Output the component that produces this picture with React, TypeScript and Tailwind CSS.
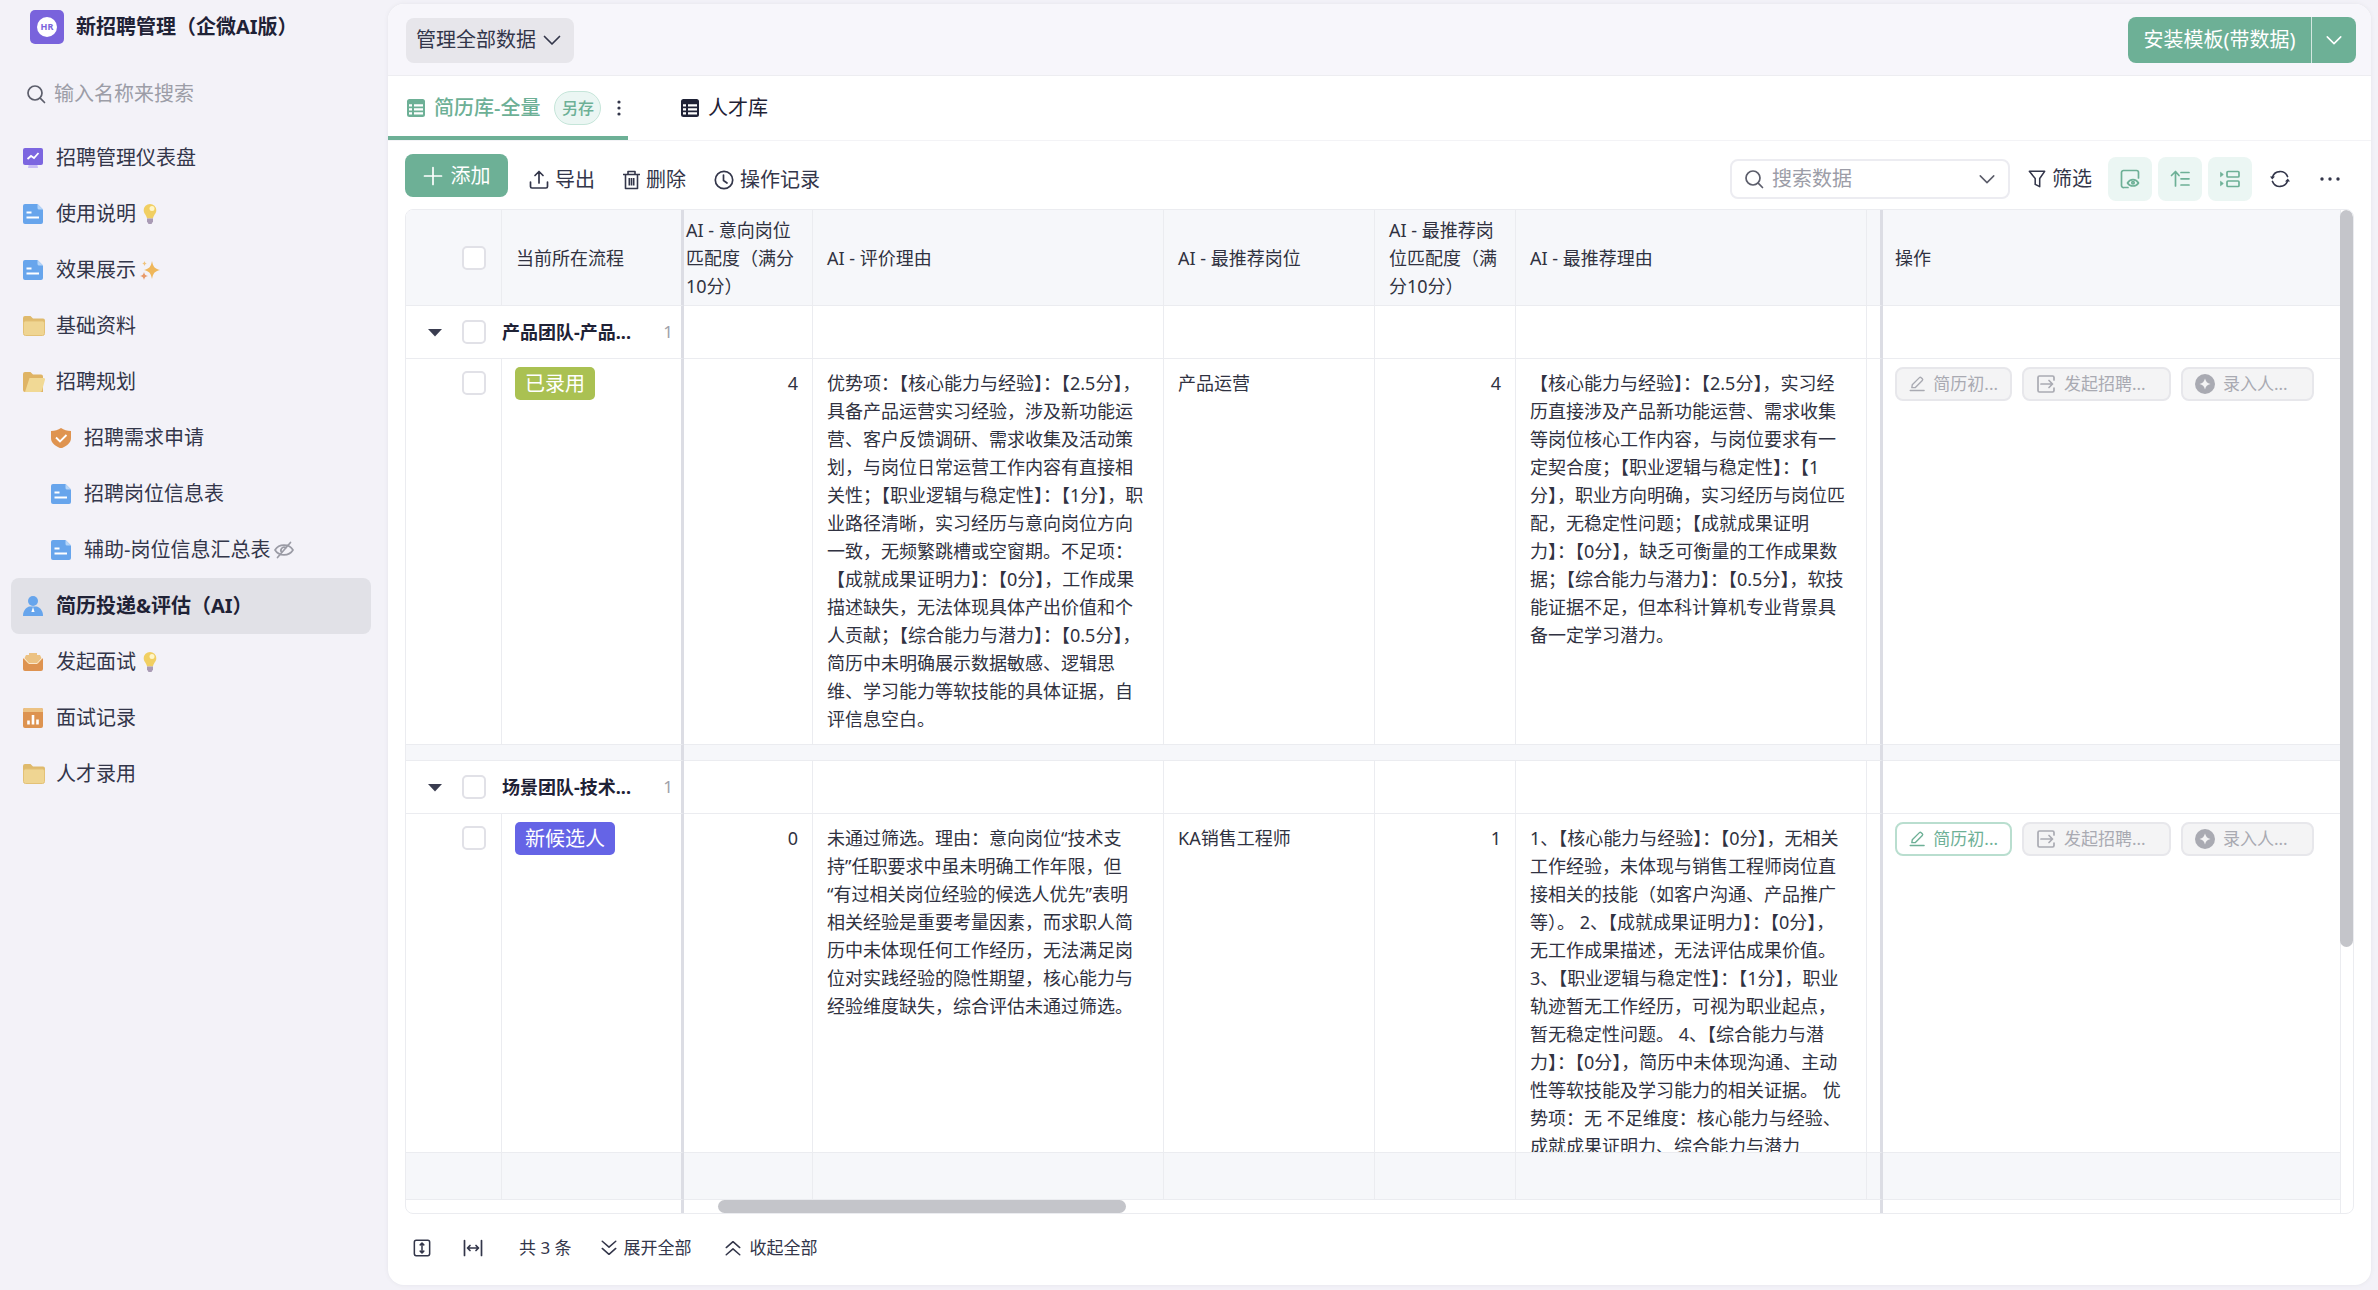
import type { ReactNode } from 'react';

type IconProps = { className?: string };

// Stroke icon wrapper, all toolbar icons are drawn on a 20x20 grid
function Stroke({ className = 'w-5 h-5', children }: { className?: string; children: ReactNode }) {
  return (
    <svg className={className} viewBox="0 0 20 20" fill="none" stroke="currentColor" strokeWidth={1.7} strokeLinecap="round" strokeLinejoin="round" aria-hidden="true">
      {children}
    </svg>
  );
}

const ChevronDown = ({ className }: IconProps) => (
  <Stroke className={className}><path d="M2.5 6.5L10 14l7.500-7.500" /></Stroke>
);

const SearchIcon = ({ className }: IconProps) => (
  <Stroke className={className}><circle cx="9" cy="9" r="7" /><path d="M14.200 14.200L18.500 18.500" /></Stroke>
);

const EditIcon = () => (
  <Stroke><path d="M3.500 14.500l.5-3.500L12.800 2.200a1.500 1.500 0 012.100 0l1.400 1.400a1.500 1.500 0 010 2.100L7.500 14.500zM1.500 18h17" /></Stroke>
);

const SendIcon = () => (
  <Stroke><path d="M18 6V3.500A1.500 1.500 0 0016.500 2h-13A1.500 1.500 0 002 3.500v13A1.500 1.500 0 003.500 18h13a1.500 1.500 0 001.500-1.500V14M5 10h11.500M13 6.500l3.500 3.500-3.500 3.500" /></Stroke>
);

const PlusDot = () => (
  <svg className="w-5 h-5" viewBox="0 0 20 20" aria-hidden="true">
    <circle cx="10" cy="10" r="10" fill="currentColor" />
    <path d="M10 4.500c.9 3.300 2.200 4.600 5.500 5.500-3.300.9-4.600 2.200-5.500 5.500-.9-3.300-2.200-4.600-5.500-5.500 3.300-.9 4.600-2.200 5.500-5.500z" fill="#f4f4f5" />
  </svg>
);

const TableIcon = () => (
  <svg className="w-5 h-5" viewBox="0 0 20 20" aria-hidden="true">
    <rect x="1" y="1" width="18" height="18" rx="2.500" fill="currentColor" />
    <path d="M3 6.200h3v2.200H3zM8 6.200h9v2.200H8zM3 10.200h3v2.200H3zM8 10.200h9v2.200H8zM3 14.200h3v2.200H3zM8 14.200h9v2.200H8z" fill="#fff" />
  </svg>
);

// Sidebar icons
const DashboardIcon = () => (
  <svg className="w-5 h-5" viewBox="0 0 20 20" aria-hidden="true">
    <path d="M6 15h8l1 5H5z" fill="#c9bdf6" />
    <rect width="20" height="17" rx="2" fill="#7c66e0" />
    <path d="M4.500 11l3.500-3 3 2 4.500-5" fill="none" stroke="#fff" strokeWidth="1.800" />
  </svg>
);

const DocIcon = () => (
  <svg className="w-5 h-5" viewBox="0 0 20 20" aria-hidden="true">
    <path d="M2 0h12.500L20 5.500V18a2 2 0 01-2 2H2a2 2 0 01-2-2V2a2 2 0 012-2z" fill="#67a5ec" />
    <path d="M14.500 0L20 5.500h-4a1.500 1.500 0 01-1.500-1.500z" fill="#b5d5f8" />
    <path d="M3.500 8.500h5M3.500 13.500h12.500" stroke="#fff" strokeWidth="1.800" />
  </svg>
);

const FolderIcon = () => (
  <svg className="w-[22px] h-5" viewBox="0 0 22 20" aria-hidden="true">
    <path d="M2 0h5.500L10 2.500h10a2 2 0 012 2V17H0V2a2 2 0 012-2z" fill="#dfba6c" />
    <rect x="0.500" y="5" width="21" height="14.500" rx="2" fill="#efd592" stroke="#e3c176" />
  </svg>
);

const FolderOpenIcon = () => (
  <svg className="w-[22px] h-5" viewBox="0 0 22 20" aria-hidden="true">
    <path d="M2 0h5.500L10 2.500h8a2 2 0 012 2V20H2a2 2 0 01-2-2V2a2 2 0 012-2z" fill="#dfb465" />
    <path d="M6.500 6H20.500a1.500 1.500 0 011.400 2L19 18.500a2 2 0 01-2 1.500H2z" fill="#f1d995" />
  </svg>
);

const ShieldIcon = () => (
  <svg className="w-5 h-5" viewBox="0 0 20 20" aria-hidden="true">
    <path d="M10 0c3 2 6 2.800 10 3v7c0 5-4 8-10 10.500C4 18 0 15 0 10V3c4-.2 7-1 10-3z" fill="#df9450" />
    <path d="M5 9.500l4 4 6.500-6.500" fill="none" stroke="#fff" strokeWidth="1.800" />
  </svg>
);

const PersonIcon = () => (
  <svg className="w-5 h-5" viewBox="0 0 20 20" aria-hidden="true">
    <circle cx="10" cy="5" r="5" fill="#67a5ec" />
    <path d="M6 10.500h8c4 1.500 6 5 6 9.500H0c0-4.500 2-8 6-9.500z" fill="#67a5ec" />
    <path d="M10 11l1.600 5H8.400z" fill="#fff" />
  </svg>
);

const BoxIcon = () => (
  <svg className="w-5 h-5" viewBox="0 0 20 20" aria-hidden="true">
    <path d="M6 1h8v2h3l3 6v6H0V9l3-6h3z" fill="#ecc283" />
    <path d="M0 6l5.500 6h9L20 6v11a2 2 0 01-2 2H2a2 2 0 01-2-2z" fill="#de9350" />
    <path d="M1 6l5 5.500h8L19 6" fill="none" stroke="#fbe7cc" strokeWidth="1" />
  </svg>
);

const ChartIcon = () => (
  <svg className="w-5 h-5" viewBox="0 0 20 20" aria-hidden="true">
    <rect width="20" height="20" rx="2" fill="#dd9350" />
    <path d="M2 0h16a2 2 0 012 2v2H0V2a2 2 0 012-2z" fill="#ecc283" />
    <path d="M5.500 16.500v-4M10 16.500V7M14.500 16.500v-5" stroke="#fff" strokeWidth="2.600" />
  </svg>
);

const BulbIcon = () => (
  <svg className="w-5 h-5" viewBox="0 0 20 20" role="img" aria-label="灯泡">
    <path d="M10 0a6.300 6.300 0 016.300 6.300c0 3.400-2.800 4.700-3.300 8.200H7c-.5-3.500-3.300-4.800-3.300-8.200A6.300 6.300 0 0110 0z" fill="#f1cf62" />
    <circle cx="12" cy="4.500" r="2.500" fill="#fff6c8" />
    <path d="M7 14.500h6v3L11.500 20h-3L7 17.500z" fill="#a99bb5" />
  </svg>
);

const SparkIcon = () => (
  <svg className="w-5 h-5" viewBox="0 0 20 20" role="img" aria-label="闪亮">
    <path d="M12 1c1.200 6 2.500 7.500 8 9-5.500 1.500-6.800 3-8 9-1.200-6-2.500-7.500-8-9 5.500-1.500 6.800-3 8-9z" fill="#efb75a" />
    <path d="M4 12c.5 2.500 1.300 3.200 4 4-2.700.8-3.500 1.500-4 4-.5-2.500-1.300-3.200-4-4 2.700-.8 3.500-1.500 4-4z" fill="#e89a6a" />
    <path d="M4.500 1c.4 1.700.9 2.200 2.500 2.600-1.600.4-2.100.9-2.500 2.600-.4-1.700-.9-2.200-2.500-2.600C3.600 3.200 4.100 2.700 4.500 1z" fill="#efc27a" />
  </svg>
);

const HiddenIcon = () => (
  <Stroke className="w-5 h-5 text-[#9a9ba5]"><path d="M1 10c4-6.500 14-6.500 18 0-4 6.500-14 6.500-18 0zM16.500 2.500l-13 15M8 12.500a3 3 0 014-4.500" /></Stroke>
);

interface NavItem {
  label: string;
  icon: ReactNode;
  suffix?: ReactNode;
  child?: boolean;
  active?: boolean;
}

const navItems: NavItem[] = [
  { label: '招聘管理仪表盘', icon: <DashboardIcon /> },
  { label: '使用说明', icon: <DocIcon />, suffix: <BulbIcon /> },
  { label: '效果展示', icon: <DocIcon />, suffix: <SparkIcon /> },
  { label: '基础资料', icon: <FolderIcon /> },
  { label: '招聘规划', icon: <FolderOpenIcon /> },
  { label: '招聘需求申请', icon: <ShieldIcon />, child: true },
  { label: '招聘岗位信息表', icon: <DocIcon />, child: true },
  { label: '辅助-岗位信息汇总表', icon: <DocIcon />, suffix: <HiddenIcon />, child: true },
  { label: '简历投递&评估（AI）', icon: <PersonIcon />, active: true },
  { label: '发起面试', icon: <BoxIcon />, suffix: <BulbIcon /> },
  { label: '面试记录', icon: <ChartIcon /> },
  { label: '人才录用', icon: <FolderIcon /> },
];

interface Candidate {
  group: string;
  status: string;
  statusClass: string;
  score: number;
  reason: string[];
  bestJob: string;
  bestScore: number;
  bestReason: string[];
  canScreen: boolean;
  bodyClass: string;
}

const candidates: Candidate[] = [
  {
    group: '产品团队-产品...',
    status: '已录用',
    statusClass: 'bg-[#aac152]',
    score: 4,
    reason: [
      '优势项：【核心能力与经验】：【2.5分】，',
      '具备产品运营实习经验，涉及新功能运',
      '营、客户反馈调研、需求收集及活动策',
      '划，与岗位日常运营工作内容有直接相',
      '关性；【职业逻辑与稳定性】：【1分】，职',
      '业路径清晰，实习经历与意向岗位方向',
      '一致，无频繁跳槽或空窗期。不足项：',
      '【成就成果证明力】：【0分】，工作成果',
      '描述缺失，无法体现具体产出价值和个',
      '人贡献；【综合能力与潜力】：【0.5分】，',
      '简历中未明确展示数据敏感、逻辑思',
      '维、学习能力等软技能的具体证据，自',
      '评信息空白。',
    ],
    bestJob: '产品运营',
    bestScore: 4,
    bestReason: [
      '【核心能力与经验】：【2.5分】，实习经',
      '历直接涉及产品新功能运营、需求收集',
      '等岗位核心工作内容，与岗位要求有一',
      '定契合度；【职业逻辑与稳定性】：【1',
      '分】，职业方向明确，实习经历与岗位匹',
      '配，无稳定性问题；【成就成果证明',
      '力】：【0分】，缺乏可衡量的工作成果数',
      '据；【综合能力与潜力】：【0.5分】，软技',
      '能证据不足，但本科计算机专业背景具',
      '备一定学习潜力。',
    ],
    canScreen: false,
    bodyClass: 'h-[375px]',
  },
  {
    group: '场景团队-技术...',
    status: '新候选人',
    statusClass: 'bg-[#6564e6]',
    score: 0,
    reason: [
      '未通过筛选。理由：意向岗位“技术支',
      '持”任职要求中虽未明确工作年限，但',
      '“有过相关岗位经验的候选人优先”表明',
      '相关经验是重要考量因素，而求职人简',
      '历中未体现任何工作经历，无法满足岗',
      '位对实践经验的隐性期望，核心能力与',
      '经验维度缺失，综合评估未通过筛选。',
    ],
    bestJob: 'KA销售工程师',
    bestScore: 1,
    bestReason: [
      '1、【核心能力与经验】：【0分】，无相关',
      '工作经验，未体现与销售工程师岗位直',
      '接相关的技能（如客户沟通、产品推广',
      '等）。 2、【成就成果证明力】：【0分】，',
      '无工作成果描述，无法评估成果价值。',
      '3、【职业逻辑与稳定性】：【1分】，职业',
      '轨迹暂无工作经历，可视为职业起点，',
      '暂无稳定性问题。 4、【综合能力与潜',
      '力】：【0分】，简历中未体现沟通、主动',
      '性等软技能及学习能力的相关证据。 优',
      '势项：无 不足维度：核心能力与经验、',
      '成就成果证明力、综合能力与潜力',
    ],
    canScreen: true,
    bodyClass: 'h-[328px]',
  },
];

function Checkbox({ label }: { label: string }) {
  return (
    <input
      type="checkbox"
      aria-label={label}
      className="block w-6 h-6 shrink-0 appearance-none rounded-[5px] border-2 border-[#e1e1e7] bg-white checked:bg-[#6db096]"
    />
  );
}

function ActionButton({ icon, label, width, enabled }: { icon: ReactNode; label: string; width: string; enabled?: boolean }) {
  const tone = enabled
    ? 'border-[#b9decf] bg-white text-[#6db096]'
    : 'border-[#e7e7eb] bg-[#f4f4f5] text-[#a9aab2]';
  return (
    <button type="button" disabled={!enabled} className={`flex h-[34px] shrink-0 items-center gap-2 rounded-lg border-2 px-3 text-[17px] ${width} ${tone}`}>
      {icon}
      <span className="whitespace-nowrap">{label}</span>
    </button>
  );
}

function Sidebar() {
  return (
    <aside className="w-[388px] shrink-0 text-xl text-[#33364a]">
      <div className="flex items-center gap-3 pl-[30px] pt-2.5">
        <svg className="w-[34px] h-[34px]" viewBox="0 0 34 34" role="img" aria-label="HR">
          <rect width="34" height="34" rx="5" fill="#7963dc" />
          <circle cx="17" cy="17" r="10" fill="#fff" />
          <text x="17" y="20" textAnchor="middle" fontSize="9" fontWeight="700" fill="#7963dc">HR</text>
        </svg>
        <h1 className="font-bold text-[#1f2236]">新招聘管理（企微AI版）</h1>
      </div>
      <label className="mt-[30px] flex h-10 items-center gap-2 pl-[26px] text-[#5c5e6b]">
        <SearchIcon className="w-5 h-5 shrink-0" />
        <input type="search" aria-label="搜索名称" placeholder="输入名称来搜索" className="w-full bg-transparent outline-none placeholder:text-[#9c9da7]" />
      </label>
      <nav className="mt-4 pl-[11px] pr-[17px]">
        {navItems.map((item) => (
          <a
            key={item.label}
            href="#"
            className={`flex h-14 items-center rounded-lg pr-3 ${item.child ? 'pl-10' : 'pl-3'} ${
              item.active ? 'bg-[#e1e1e7] font-bold text-[#1f2236]' : ''
            }`}
          >
            <span className="flex w-[33px] shrink-0">{item.icon}</span>
            <span className="whitespace-nowrap">{item.label}</span>
            {item.suffix && <span className="ml-1">{item.suffix}</span>}
          </a>
        ))}
      </nav>
    </aside>
  );
}

function Toolbar() {
  return (
    <div className="flex items-start pl-[17px] pr-[31px] pt-[13px] text-xl text-[#33364a]">
      <button type="button" className="flex h-[43px] w-[103px] items-center justify-center gap-2 rounded-lg bg-[#6db096] text-white">
        <Stroke><path d="M10 1.500v17M1.500 10h17" /></Stroke>
        添加
      </button>
      <div className="flex h-12 items-center gap-7 pl-[21px] pt-1">
        <button type="button" className="flex items-center gap-1.5">
          <Stroke><path d="M10 13V2M6 5.500L10 1.500l4 4M1.500 12v4.500A1.500 1.500 0 003 18h14a1.500 1.500 0 001.500-1.500V12" /></Stroke>
          导出
        </button>
        <button type="button" className="flex items-center gap-1.5">
          <svg className="w-[17px] h-5" viewBox="0 0 17 20" fill="none" stroke="currentColor" strokeWidth="1.600" strokeLinejoin="round" aria-hidden="true">
            <path d="M0 4.500h17M5 4V1.500h7V4M2.500 4.500V18.500h12V4.500M6.300 8v7.500M8.500 8v7.500M10.700 8v7.500" />
          </svg>
          删除
        </button>
        <button type="button" className="flex items-center gap-1.5">
          <Stroke><circle cx="10" cy="10" r="8.700" /><path d="M9.500 5v5.500l3.500 2.500" /></Stroke>
          操作记录
        </button>
      </div>
      <div className="ml-auto flex items-center pt-[3px]">
        <label className="flex h-10 w-[280px] items-center gap-2 rounded-lg border-2 border-[#ececf1] px-3 text-[#5c5e6b]">
          <SearchIcon className="w-5 h-5 shrink-0" />
          <input type="search" aria-label="搜索数据" placeholder="搜索数据" className="min-w-0 flex-1 bg-transparent outline-none placeholder:text-[#9c9da7]" />
          <ChevronDown className="w-[18px] h-[18px] shrink-0" />
        </label>
        <button type="button" className="ml-[18px] flex items-center gap-1.5">
          <Stroke className="w-[18px] h-5"><path d="M1.500 1.500h17l-5.500 8v9l-5-2.500v-6.500z" /></Stroke>
          筛选
        </button>
        <div className="ml-4 flex gap-[6px] text-[#6db096]">
          <button type="button" aria-label="备注" className="flex h-11 w-11 items-center justify-center rounded-lg bg-[#ebf6f3]">
            <Stroke><path d="M8 18.500H4A2 2 0 011.500 16.500V3.500A2 2 0 013.500 1.500h13a2 2 0 012 2V9M7.500 14c2.500-4.500 8.500-4.500 11 0-2.500 4-8.500 4-11 0z" /><circle cx="13" cy="13.800" r="1.200" /></Stroke>
          </button>
          <button type="button" aria-label="排序" className="flex h-11 w-11 items-center justify-center rounded-lg bg-[#ebf6f3]">
            <Stroke><path d="M5.500 17V3M1.500 6.500l4-4 3.500 4M11 3.500h8M11 9.800h8M11 16h8" /></Stroke>
          </button>
          <button type="button" aria-label="分组" className="flex h-11 w-11 items-center justify-center rounded-lg bg-[#ebf6f3]">
            <Stroke><rect x="7" y="2.500" width="12" height="5.500" rx="1" /><rect x="7" y="12" width="12" height="5.500" rx="1" /><path d="M.8 3.500l2.500 2-2.500 2zM.8 12.500l2.500 2-2.500 2z" fill="currentColor" strokeWidth="0.800" /></Stroke>
          </button>
        </div>
        <button type="button" aria-label="刷新" className="ml-[18px]">
          <Stroke><path d="M2.500 8a8 8 0 0115-.5M17.500 12a8 8 0 01-15 .5" /><path d="M0 7.500h5L2.200 10.500zM15 12.500h5l-2.200-3z" fill="currentColor" stroke="none" /></Stroke>
        </button>
        <button type="button" aria-label="更多" className="ml-[30px]">
          <svg className="w-5 h-5" viewBox="0 0 20 20" fill="currentColor" aria-hidden="true"><circle cx="2" cy="10" r="1.700" /><circle cx="10" cy="10" r="1.700" /><circle cx="18" cy="10" r="1.700" /></svg>
        </button>
      </div>
    </div>
  );
}

// Cell borders shared by every row
const line = 'border-r border-[#ebecf0]';
const pin = 'border-r-[3px] border-[#dcdde4]';

function CandidateRows({ item }: { item: Candidate }) {
  return (
    <>
      <tr className="h-[52px]">
        <td colSpan={2} className={pin}>
          <div className="flex items-center pl-[22px] pr-2">
            <svg className="mr-5 w-3.5 h-3.5" viewBox="0 0 14 14" aria-hidden="true"><path d="M0 4h14L7 11.500z" fill="#3a3d50" /></svg>
            <Checkbox label={`选择${item.group}`} />
            <span className="ml-4 font-bold text-[#1f2236]">{item.group}</span>
            <span className="ml-auto text-[17px] text-[#a0a1aa]">1</span>
          </div>
        </td>
        <td className={line} />
        <td className={line} />
        <td className={line} />
        <td className={line} />
        <td className={line} />
        <td className={pin} />
        <td />
      </tr>
      <tr className="align-top [&>td]:border-t [&>td]:border-t-[#ebecf0]">
        <td className={`pl-14 pt-3 ${line}`}><Checkbox label={`选择${item.status}`} /></td>
        <td className={`pl-[13px] pt-2 ${pin}`}>
          <span className={`inline-flex h-[33px] items-center rounded-[5px] px-2.5 text-xl text-white ${item.statusClass}`}>{item.status}</span>
        </td>
        <td className={`pt-2.5 pr-3.5 text-right ${line}`}>{item.score}</td>
        <td className={`pt-2.5 pl-3.5 ${line}`}>
          <div className={`overflow-hidden whitespace-pre ${item.bodyClass}`}>{item.reason.join('\n')}</div>
        </td>
        <td className={`pt-2.5 pl-3.5 ${line}`}>{item.bestJob}</td>
        <td className={`pt-2.5 pr-3.5 text-right ${line}`}>{item.bestScore}</td>
        <td className={`pt-2.5 pl-3.5 ${line}`}>
          <div className={`overflow-hidden whitespace-pre ${item.bodyClass}`}>{item.bestReason.join('\n')}</div>
        </td>
        <td className={pin} />
        <td className="pl-3 pt-2">
          <div className="flex gap-2.5">
            <ActionButton icon={<EditIcon />} label="简历初..." width="w-[117px]" enabled={item.canScreen} />
            <ActionButton icon={<SendIcon />} label="发起招聘..." width="w-[149px]" />
            <ActionButton icon={<PlusDot />} label="录入人..." width="w-[133px]" />
          </div>
        </td>
      </tr>
    </>
  );
}

function DataTable() {
  return (
    <div className="relative mx-[17px] mt-[7px] flex overflow-hidden rounded-lg border border-[#ebecf0]">
      <table className="min-w-0 flex-1 table-fixed border-separate border-spacing-0 text-lg leading-7 text-[#303241]">
        <colgroup>
          <col className="w-24" />
          <col className="w-[182px]" />
          <col className="w-[129px]" />
          <col className="w-[351px]" />
          <col className="w-[211px]" />
          <col className="w-[141px]" />
          <col className="w-[351px]" />
          <col className="w-4" />
          <col />
        </colgroup>
        <thead className="bg-[#f6f7fa] text-left [&_th]:border-b [&_th]:border-b-[#ebecf0] [&_th]:font-normal">
          <tr className="h-24">
            <th className={`pl-14 ${line}`}><Checkbox label="全选" /></th>
            <th className={`pl-3.5 ${pin}`}>当前所在流程</th>
            <th className={`whitespace-pre pl-0.5 ${line}`}>{'AI - 意向岗位\n匹配度（满分\n10分）'}</th>
            <th className={`pl-3.5 ${line}`}>AI - 评价理由</th>
            <th className={`pl-3.5 ${line}`}>AI - 最推荐岗位</th>
            <th className={`whitespace-pre pl-3.5 ${line}`}>{'AI - 最推荐岗\n位匹配度（满\n分10分）'}</th>
            <th className={`pl-3.5 ${line}`}>AI - 最推荐理由</th>
            <th className={pin} />
            <th className="pl-3">操作</th>
          </tr>
        </thead>
        <tbody>
          <CandidateRows item={candidates[0]} />
          <tr className="h-[17px] bg-[#f6f7fa] [&>td]:border-y [&>td]:border-y-[#ebecf0]">
            <td colSpan={2} className={pin} />
            <td colSpan={6} className={pin} />
            <td />
          </tr>
          <CandidateRows item={candidates[1]} />
          <tr className="h-12 bg-[#f6f7fa] [&>td]:border-y [&>td]:border-y-[#ebecf0]">
            <td className={line} />
            <td className={pin} />
            <td className={line} />
            <td className={line} />
            <td className={line} />
            <td className={line} />
            <td className={line} />
            <td className={pin} />
            <td />
          </tr>
          <tr className="h-[13px]">
            <td colSpan={2} className={pin} />
            <td colSpan={6} className={pin} />
            <td />
          </tr>
        </tbody>
      </table>
      <div className="w-[13px] shrink-0 border-l border-[#ebecf0]">
        <div className="-ml-px h-[737px] w-[13px] rounded-full bg-[#c4c5ca]" />
      </div>
      {/* Horizontal scroll thumb over the bottom strip */}
      <div className="absolute bottom-0 left-[312px] h-[13px] w-[408px] rounded-full bg-[#c4c5ca]" />
    </div>
  );
}

export default function App() {
  return (
    <div lang="zh-CN" className="flex min-h-screen bg-[#f3f2f8] [font-family:'Noto_Sans','Noto_Sans_CJK_SC',sans-serif]">
      <Sidebar />
      <main className="mb-[5px] mr-[7px] mt-1 flex min-w-0 flex-1 flex-col overflow-hidden rounded-2xl bg-white shadow-[0_0_4px_#e4e4ea]">
        <header className="flex h-[72px] items-center justify-between border-b border-[#ededf1] bg-[#f7f6fb] pl-[18px] pr-[15px] pt-px text-xl">
          <div className="relative">
            <select aria-label="数据范围" className="h-[45px] w-[168px] appearance-none rounded-lg bg-[#e7e6eb] pl-2.5 text-[#33364a]">
              <option>管理全部数据</option>
            </select>
            <ChevronDown className="pointer-events-none absolute right-3 top-3 w-5 h-5 text-[#33364a]" />
          </div>
          <div className="flex h-[46px] overflow-hidden rounded-lg bg-[#6db096] text-white">
            <button type="button" className="w-[184px] border-r border-white/70">安装模板(带数据)</button>
            <button type="button" aria-label="更多安装选项" className="flex w-11 items-center justify-center">
              <ChevronDown className="w-[18px] h-[18px]" />
            </button>
          </div>
        </header>

        <div className="flex h-[65px] items-stretch border-b border-[#f3f3f6] text-xl" role="tablist">
          <div className="flex w-[240px] items-center border-b-4 border-[#6db096] pl-[18px] pt-1 text-[#6db096]">
            <button type="button" role="tab" aria-selected="true" className="flex items-center gap-2 font-medium whitespace-nowrap"><TableIcon />简历库-全量</button>
            <button type="button" className="ml-3.5 h-[34px] w-[47px] shrink-0 rounded-full border border-[#c5e5d9] bg-[#ebf6f3] text-base font-medium">另存</button>
            <button type="button" aria-label="视图菜单" className="ml-auto mr-[7px] text-[#33364a]">
              <svg className="w-1 h-5" viewBox="0 0 4 20" fill="currentColor" aria-hidden="true"><circle cx="2" cy="4" r="1.600" /><circle cx="2" cy="10" r="1.600" /><circle cx="2" cy="16" r="1.600" /></svg>
            </button>
          </div>
          <button type="button" role="tab" aria-selected="false" className="ml-[52px] flex items-center gap-2 text-[#1f2236]"><TableIcon />人才库</button>
        </div>

        <Toolbar />
        <DataTable />

        <footer className="flex flex-1 items-center pb-1 pl-[25px] text-[17px] text-[#33364a]">
          <button type="button" aria-label="行高">
            <Stroke className="w-[18px] h-[18px]"><rect x="1.500" y="1.500" width="17" height="17" rx="2" /><path d="M10 5v10M8 6.500L10 4.500l2 2M8 13.500l2 2 2-2" /></Stroke>
          </button>
          <button type="button" aria-label="列宽" className="ml-8">
            <Stroke><path d="M1.500 2.500v15M18.500 2.500v15M5 10h10M7 7.500L4.500 10 7 12.500M13 7.500l2.500 2.500-2.500 2.500" /></Stroke>
          </button>
          <span className="ml-9">共 3 条</span>
          <button type="button" className="ml-7 flex items-center gap-1.5">
            <Stroke className="w-[18px] h-[18px]"><path d="M2.500 2.500L10 9l7.500-6.500M2.500 10.500L10 17l7.500-6.500" /></Stroke>
            展开全部
          </button>
          <button type="button" className="ml-8 flex items-center gap-2">
            <Stroke className="w-[18px] h-[18px]"><path d="M2.500 9.500L10 3l7.500 6.500M2.500 17.500L10 11l7.500 6.500" /></Stroke>
            收起全部
          </button>
        </footer>
      </main>
    </div>
  );
}
